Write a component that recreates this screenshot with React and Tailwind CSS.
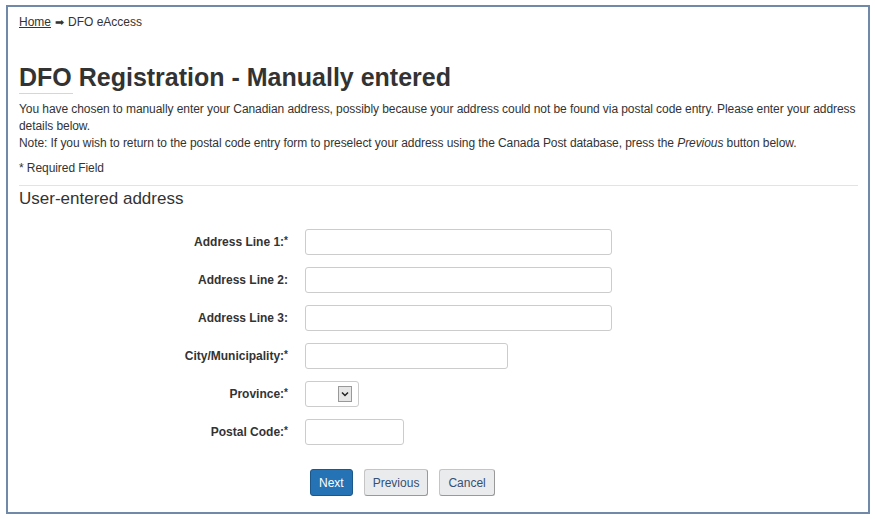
import { useState } from 'react'

const fields = [
  { label: 'Address Line 1:', required: true, width: 'w-[307px]' },
  { label: 'Address Line 2:', required: false, width: 'w-[307px]' },
  { label: 'Address Line 3:', required: false, width: 'w-[307px]' },
  { label: 'City/Municipality:', required: true, width: 'w-[203px]' },
]

function Label({ text, required }) {
  return (
    <label className="w-[286px] pr-[17px] text-right font-bold text-[12px] text-[#333]">
      {text}
      {required && <span className="text-[10px] align-top">*</span>}
    </label>
  )
}

function App() {
  const [values, setValues] = useState({})

  const handleChange = (key, value) => {
    setValues({ ...values, [key]: value })
  }

  return (
    <div className="w-[875px] h-[519px] bg-white pt-[5px] pl-[6px] font-['Liberation_Sans',Arial,sans-serif] text-[#333]">
      <div className="w-[864px] h-[509px] border-2 border-[#7189a8] pl-[11px] pr-[9px]">
        <div className="mt-[7px] text-[12px] leading-[16px] flex items-center">
          <a href="#" className="underline text-[#333]">Home</a>
          <span className="mx-[4px] text-[11px]">➡</span>
          <span>DFO eAccess</span>
        </div>

        <h1 className="mt-[32px] text-[25px] leading-[30px] font-bold text-[#333]">
          DFO Registration - Manually entered
        </h1>
        <div className="w-[54px] h-px bg-[#d6d6d6] mt-[1px]"></div>

        <div className="mt-[7px] text-[12px] leading-[17px] tracking-[-0.07px]">
          <p>
            You have chosen to manually enter your Canadian address, possibly because your address could not be found via postal code entry. Please enter your address details below.
          </p>
          <p>
            Note: If you wish to return to the postal code entry form to preselect your address using the Canada Post database, press the <i>Previous</i> button below.
          </p>
          <p className="mt-[8px]">* Required Field</p>
        </div>

        <div className="mt-[8px] h-px bg-[#e3e3e3] w-[839px]"></div>
        <h2 className="mt-[2px] text-[17px] leading-[22px] text-[#333]">User-entered address</h2>

        <div className="mt-[19px] flex flex-col gap-[12px]">
          {fields.map(field => (
            <div key={field.label} className="flex items-center">
              <Label text={field.label} required={field.required} />
              <input
                type="text"
                value={values[field.label] || ''}
                onChange={event => handleChange(field.label, event.target.value)}
                className={`${field.width} h-[26px] border border-[#ccc] rounded-[3px] px-2 text-[12px] outline-none`}
              />
            </div>
          ))}

          <div className="flex items-center">
            <Label text="Province:" required />
            <div className="w-[54px] h-[26px] border border-[#ccc] rounded-[3px] flex items-center justify-end pr-[6px]">
              <div className="w-[14px] h-[16px] bg-[#e6e6e6] border border-[#999] flex items-center justify-center">
                <svg width="8" height="6" viewBox="0 0 8 6">
                  <path d="M1 1.5 L4 4.5 L7 1.5" fill="none" stroke="#222" strokeWidth="1.5" />
                </svg>
              </div>
            </div>
          </div>

          <div className="flex items-center">
            <Label text="Postal Code:" required />
            <input
              type="text"
              value={values.postal || ''}
              onChange={event => handleChange('postal', event.target.value)}
              className="w-[99px] h-[26px] border border-[#ccc] rounded-[3px] px-2 text-[12px] outline-none"
            />
          </div>
        </div>

        <div className="mt-[24px] ml-[291px] flex gap-[11px] text-[12px]">
          <button className="h-[27px] px-[8px] bg-[#2572b4] border border-[#1c578a] rounded-[3px] text-white">
            Next
          </button>
          <button className="h-[27px] px-[8px] bg-[#eaebed] border border-[#c5c5c5] border-b-[#999] border-r-[#999] rounded-[3px] text-[#335075]">
            Previous
          </button>
          <button className="h-[27px] px-[8px] bg-[#eaebed] border border-[#c5c5c5] border-b-[#999] border-r-[#999] rounded-[3px] text-[#335075]">
            Cancel
          </button>
        </div>
      </div>
    </div>
  )
}

export default App
